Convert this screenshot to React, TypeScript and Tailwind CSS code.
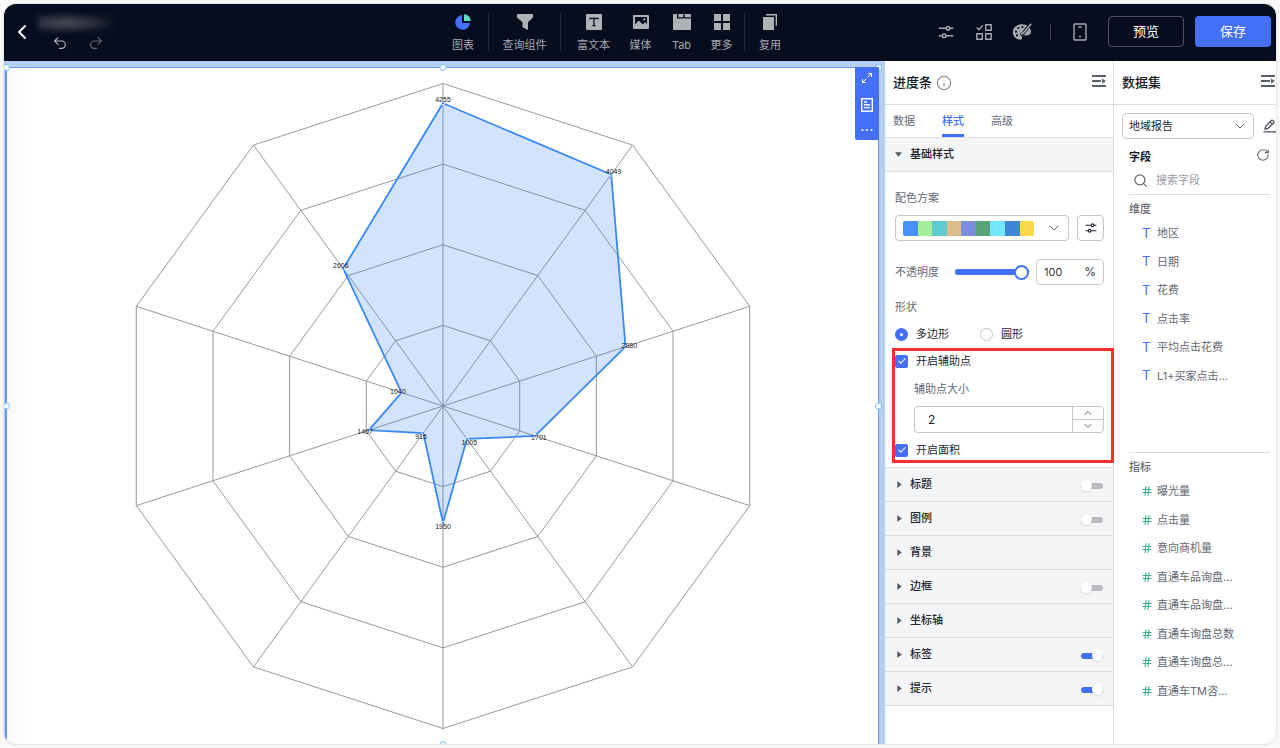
import React, { useState } from "react";
import {
  ChevronLeft,
  ChevronDown,
  ChevronUp,
  Undo2,
  Redo2,
  Check,
  Hash,
  Search,
  Maximize2,
  RotateCw,
  Info,
} from "lucide-react";

const PALETTE = [
  "bg-[#4690f7]",
  "bg-[#a5ee9a]",
  "bg-[#5fcbd0]",
  "bg-[#dcbc8a]",
  "bg-[#7c8edb]",
  "bg-[#5aa279]",
  "bg-[#71e6fd]",
  "bg-[#3f87d6]",
  "bg-[#fbd94b]",
];

const DIMENSIONS = ["地区", "日期", "花费", "点击率", "平均点击花费", "L1+买家点击…"];
const MEASURES = [
  "曝光量",
  "点击量",
  "意向商机量",
  "直通车品询盘…",
  "直通车品询盘…",
  "直通车询盘总数",
  "直通车询盘总…",
  "直通车TM咨…",
];

const VALUES = [4255, 4049, 2880, 1701, 1005, 1950, 915, 1467, 1040, 2606];
const AXIS_MIN = 500;
const AXIS_MAX = 4500;
const RADIUS = 322.5;

function polar(index: number, r: number): [number, number] {
  const angle = (index * 2 * Math.PI) / VALUES.length;
  return [Math.sin(angle) * r, -Math.cos(angle) * r];
}

function ring(radii: number[]) {
  return radii
    .map((r, i) => polar(i, r).map((n) => n.toFixed(2)).join(","))
    .join(" ");
}

function RadarChart() {
  const radii = VALUES.map((v) => ((v - AXIS_MIN) / (AXIS_MAX - AXIS_MIN)) * RADIUS);
  return (
    <svg viewBox="-310 -326 620 652" className="h-[652px] w-[620px] shrink-0" role="img" aria-label="雷达图">
      <g fill="none" stroke="#999" strokeWidth="1">
        {[0.25, 0.5, 0.75, 1].map((k) => (
          <polygon key={k} points={ring(VALUES.map(() => RADIUS * k))} />
        ))}
        {VALUES.map((_, i) => {
          const [x, y] = polar(i, RADIUS);
          return <line key={i} x1="0" y1="0" x2={x} y2={y} />;
        })}
      </g>
      <polygon points={ring(radii)} fill="#1d77f7" fillOpacity="0.2" />
      <polygon points={ring(radii)} fill="none" stroke="#3a88f8" strokeWidth="1.8" strokeLinejoin="bevel" />
      {radii.map((r, i) => {
        const [x, y] = polar(i, r);
        return <circle key={i} cx={x} cy={y} r="1.6" fill="#3a88f8" stroke="#fff" strokeWidth="0.8" />;
      })}
      <g fill="#222" fontSize="7" textAnchor="middle" className="font-['Liberation_Sans',sans-serif]">
        {radii.map((r, i) => {
          const [x, y] = polar(i, r + 4);
          return (
            <text key={i} x={x} y={y + 2.5}>
              {VALUES[i]}
            </text>
          );
        })}
      </g>
    </svg>
  );
}

function PieIcon() {
  return (
    <svg viewBox="0 0 18 18" className="size-[18px]">
      <path d="M8 2v8h8a7.4 7.4 0 1 1-8-8z" fill="#4370f6" />
      <path d="M10 1.2A7 7 0 0 1 16.8 8H10z" fill="#5fdcc0" />
    </svg>
  );
}
function FunnelIcon() {
  return (
    <svg viewBox="0 0 18 18" className="size-[18px]" fill="#b0b1b5">
      <path d="M1.5 1h15a.5.5 0 0 1 .5.5v3L12 9.3V17l-5.500-2.800V9.300L1 4.500v-3a.5.5 0 0 1 .5-.5z" />
    </svg>
  );
}
function RichTextIcon() {
  return (
    <svg viewBox="0 0 18 18" className="size-[18px]">
      <rect x="1" y="1" width="16" height="16" rx="1" fill="#b0b1b5" />
      <path d="M5 6.500V5.400h8v1.100M9 5.400v7.200M7.400 12.600h3.200" stroke="#070d1f" strokeWidth="1.300" fill="none" />
    </svg>
  );
}
function MediaIcon() {
  return (
    <svg viewBox="0 0 18 18" className="size-[18px]">
      <rect x="1" y="2" width="16" height="14" rx="1" fill="#b0b1b5" />
      <path d="M3 11.500V4h12v7.500l-1.600-2.400-2.700 2.400-3.900-4z" fill="#070d1f" />
      <circle cx="12.400" cy="6.400" r="1.100" fill="#b0b1b5" />
    </svg>
  );
}
function TabIcon() {
  return (
    <svg viewBox="0 0 18 18" className="size-[18px]" fill="#b0b1b5">
      <path d="M0 2a1 1 0 0 1 1-1h3v4.500h14V16a1 1 0 0 1-1 1H1a1 1 0 0 1-1-1zM5.400 1h5v3.200h-5zM11.800 1H17a1 1 0 0 1 1 1v2.200h-6.200z" />
    </svg>
  );
}
function GridIcon() {
  return (
    <svg viewBox="0 0 18 18" className="size-[18px]" fill="#b0b1b5">
      <path d="M1 1h7v7H1zM10 1h7v7h-7zM1 10h7v7H1zM10 10h7v7h-7z" />
    </svg>
  );
}
function CopyIcon() {
  return (
    <svg viewBox="0 0 18 18" className="size-[18px]">
      <rect x="2" y="4" width="11" height="13" rx=".6" fill="#b0b1b5" />
      <path d="M5 1.700h10.300v11" stroke="#b0b1b5" strokeWidth="1.400" fill="none" />
    </svg>
  );
}
function SlidersIcon({ className }: { className: string }) {
  return (
    <svg viewBox="0 0 16 16" className={className} fill="none" stroke="currentColor" strokeWidth="1.500">
      <path d="M.8 4.300h7.400M12 4.300h3.200M.8 11.700h3.400M8 11.700h7.200" />
      <circle cx="10.100" cy="4.300" r="1.800" />
      <circle cx="6.100" cy="11.700" r="1.800" />
    </svg>
  );
}
function CollapseIcon() {
  return (
    <svg viewBox="0 0 16 14" className="h-3.5 w-4 shrink-0 text-[#5a5e67]">
      <path d="M1 2h14M1 7h9M1 12h14" stroke="currentColor" strokeWidth="2" />
      <path d="M11 4.400l4 2.600-4 2.600z" fill="currentColor" />
    </svg>
  );
}

const TOOL_GROUPS = [
  { className: "w-[51px]", tools: [{ label: "图表", icon: PieIcon, width: "w-[51px]" }] },
  { className: "w-[72px]", tools: [{ label: "查询组件", icon: FunnelIcon, width: "w-[72px]" }] },
  {
    className: "w-[184px] pl-2",
    tools: [
      { label: "富文本", icon: RichTextIcon, width: "w-[48px]" },
      { label: "媒体", icon: MediaIcon, width: "w-[46px]" },
      { label: "Tab", icon: TabIcon, width: "w-[36px]" },
      { label: "更多", icon: GridIcon, width: "w-[44px]" },
    ],
  },
  { className: "w-[50px]", tools: [{ label: "复用", icon: CopyIcon, width: "w-[50px]" }] },
];

function Header() {
  return (
    <header className="flex h-[57px] shrink-0 items-center bg-[#070d1f] pb-0.5">
      <div className="flex grow items-center gap-1 pl-1.5">
        <button aria-label="返回" className="flex text-white">
          <ChevronLeft className="size-6" strokeWidth={2} />
        </button>
        <div className="flex flex-col gap-0.5">
          <div className="h-5 w-[78px] bg-[radial-gradient(ellipse_at_35%_50%,#494c55,#2b2f3b_40%,#0b1122_70%)] blur-[2px]" />
          <div className="flex gap-5 pl-3.5 text-[#b0b1b5]">
            <button aria-label="撤销">
              <Undo2 className="size-4" strokeWidth={1.8} />
            </button>
            <button aria-label="重做" className="text-[#666a73]">
              <Redo2 className="size-4" strokeWidth={1.8} />
            </button>
          </div>
        </div>
      </div>
      <nav className="flex shrink-0 divide-x divide-[#262b3a]">
        {TOOL_GROUPS.map((group) => (
          <div key={group.tools[0].label} className={`flex h-[38px] justify-center ${group.className}`}>
            {group.tools.map(({ label, icon: Icon, width }) => (
              <button
                key={label}
                className={`flex flex-col items-center justify-between whitespace-nowrap text-[11px] leading-3 text-[#a6a8ae] ${width}`}
              >
                <Icon />
                {label}
              </button>
            ))}
          </div>
        ))}
      </nav>
      <div className="flex w-[481px] shrink-0 items-center justify-end pr-[5px] text-[#a6a8ae]">
        <button aria-label="参数" className="mr-[22px]">
          <SlidersIcon className="size-4" />
        </button>
        <button aria-label="批量选择" className="mr-[20px]">
          <svg viewBox="0 0 16 16" className="size-4" fill="none" stroke="currentColor" strokeWidth="1.400">
            <path d="M.8 3.600L3 5.800 6.800 1.400M9.700.8h5.500v5.500H9.700zM.8 9.700h5.500v5.500H.8zM9.700 9.700h5.500v5.500H9.700z" />
          </svg>
        </button>
        <button aria-label="主题" className="mr-[18px]">
          <svg viewBox="0 0 20 18" className="h-[18px] w-5">
            <path
              d="M10 1.200C4.700 1.200.8 4.700.8 9c0 4.400 3.600 7.800 7.400 7.800 2.300 0 2-1.500 1.800-2.400-.2-1.200.5-2.200 1.900-2.200h3.400c2.200 0 3.700-1.200 3.700-3.700 0-4.200-4.300-7.300-9-7.300z"
              fill="currentColor"
            />
            <g fill="#070d1f">
              <circle cx="4" cy="8.700" r="1.100" />
              <circle cx="6.300" cy="5" r="1.100" />
              <circle cx="10.400" cy="4" r="1.100" />
              <circle cx="5" cy="12.300" r="1.100" />
            </g>
            <path d="M18.800.6L11 10.500l-2.500 1.300" stroke="#070d1f" strokeWidth="3.200" fill="none" />
            <path d="M19.200.8L11.500 9.800l-2.600 1.400" stroke="currentColor" strokeWidth="1.600" fill="none" />
          </svg>
        </button>
        <span className="mr-[22px] h-4 w-px bg-[#3c404d]" />
        <button aria-label="移动端" className="mr-[21px]">
          <svg viewBox="0 0 14 18" className="h-[18px] w-3.5" fill="none" stroke="currentColor" strokeWidth="1.400">
            <rect x="1" y="1" width="12" height="16" rx=".6" />
            <path d="M5.500 4h3M6 13.500h2" />
          </svg>
        </button>
        <button className="mr-[11px] h-[31px] w-[76px] rounded-sm border border-[#50535f] text-[13px] text-white">预览</button>
        <button className="h-[31px] w-[76px] rounded-sm bg-[#4370f6] text-[13px] text-white">保存</button>
      </div>
    </header>
  );
}

function Canvas() {
  const handle = "absolute size-[7px] rounded-full border border-[#7cc4f3] bg-white";
  return (
    <main className="flex min-w-0 grow overflow-hidden bg-[#b4cff2] pt-1.5 pr-1.5 pl-px">
      <div className="relative flex grow items-center justify-center border-t border-r border-l-2 border-[#6c93f3] bg-[linear-gradient(to_right,#f9f9fa,#fff_24px)] pb-px">
        <RadarChart />
        <span className={`${handle} -top-1 -left-1`} />
        <span className={`${handle} -top-1 left-1/2 -translate-x-1/2`} />
        <span className={`${handle} top-1/2 -left-1 -translate-y-1/2`} />
        <span className={`${handle} top-1/2 -right-1 -translate-y-1/2`} />
        <span className={`${handle} -bottom-1 left-1/2 -translate-x-1/2`} />
        <span className={`${handle} -top-1 -right-1`} />
        <div className="absolute -top-px -right-px flex h-[73px] w-6 flex-col items-center justify-between rounded-b-xs bg-[#4370f6] py-1 text-white">
          <button aria-label="全屏" className="p-px">
            <Maximize2 className="size-3" strokeWidth={2} />
          </button>
          <button aria-label="详情">
            <svg viewBox="0 0 12 14" className="h-3.5 w-3" fill="none" stroke="currentColor" strokeWidth="1.400">
              <path d="M.7.7h10.600v12.600H.7zM3 4h3M3 6.800h6M3 9.600h6" />
            </svg>
          </button>
          <button aria-label="更多操作" className="py-1">
            <svg viewBox="0 0 12 4" className="h-1 w-3" fill="currentColor">
              <circle cx="1.500" cy="2" r="1.100" />
              <circle cx="6" cy="2" r="1.100" />
              <circle cx="10.500" cy="2" r="1.100" />
            </svg>
          </button>
        </div>
      </div>
    </main>
  );
}

function CheckRow({ id, label }: { id: string; label: string }) {
  const [on, setOn] = useState(true);
  return (
    <label htmlFor={id} className="flex h-5 items-center gap-2 text-[11px] text-[#23262e]">
      <span className="grid size-[13px] place-items-center">
        <input
          id={id}
          type="checkbox"
          checked={on}
          onChange={(e) => setOn(e.target.checked)}
          className="col-start-1 row-start-1 size-[13px] appearance-none rounded-xs border border-[#c4c6cc] checked:border-[#4370f6] checked:bg-[#4370f6]"
        />
        {on && <Check className="pointer-events-none z-10 col-start-1 row-start-1 size-2.5 text-white" strokeWidth={2.5} />}
      </span>
      {label}
    </label>
  );
}

function Section({ label, toggle }: { label: string; toggle?: boolean }) {
  const [on, setOn] = useState(toggle);
  return (
    <div className="flex h-[34px] items-center justify-between border-b border-[#dcdde0] bg-[#f4f5f7] pr-2.5 pl-3">
      <button className="flex items-center gap-2 text-[11px] font-medium text-[#23262e]">
        <svg viewBox="0 0 5 8" className="h-[7px] w-[5px]" fill="#555962">
          <path d="M0 0l5 4-5 4z" />
        </svg>
        {label}
      </button>
      {toggle !== undefined && (
        <button
          role="switch"
          aria-checked={!!on}
          aria-label={label}
          onClick={() => setOn(!on)}
          className={`mt-0.5 flex h-1.5 w-[22px] items-center rounded-full ${on ? "justify-end bg-[#4370f6]" : "bg-[#bbbcc2]"}`}
        >
          <span className="size-[11px] shrink-0 rounded-full bg-white shadow-sm" />
        </button>
      )}
    </div>
  );
}

function StylePanel() {
  const [shape, setShape] = useState("polygon");
  return (
    <aside className="flex w-[229px] shrink-0 flex-col border-r border-[#dcdde0] bg-white">
      <div className="flex h-11 shrink-0 items-center justify-between border-b border-[#dcdde0] pr-1.5 pl-2">
        <h2 className="flex items-center gap-1 text-[13px] font-medium text-[#16191f]">
          进度条
          <Info className="size-4 text-[#7d818a]" strokeWidth={1.6} />
        </h2>
        <button aria-label="收起样式面板" className="mb-1">
          <CollapseIcon />
        </button>
      </div>
      <div role="tablist" className="flex h-[33px] shrink-0 gap-[27px] border-b border-[#dcdde0] pl-2 text-[11px] text-[#646873]">
        <button role="tab" className="border-b-[3px] border-transparent pt-1">数据</button>
        <button role="tab" aria-selected className="border-b-[3px] border-[#4370f6] pt-1 font-medium text-[#4370f6]">
          样式
        </button>
        <button role="tab" className="border-b-[3px] border-transparent pt-1">高级</button>
      </div>
      <button className="flex h-[34px] shrink-0 items-center gap-2 border-b border-[#dcdde0] bg-[#f4f5f7] pl-2.5 text-[11px] font-medium text-[#16191f]">
        <svg viewBox="0 0 8 5" className="h-[5px] w-[7px]" fill="#555962">
          <path d="M0 0h8L4 5z" />
        </svg>
        基础样式
      </button>
      <div className="border-b border-[#dcdde0] pt-4 pr-[9px] pb-[7px] pl-2.5 text-[11px] text-[#646873]">
        <p className="mb-[7px] leading-5">配色方案</p>
        <div className="mb-[18px] flex gap-2">
          <button
            aria-label="配色方案"
            aria-haspopup="listbox"
            className="flex h-[26px] grow items-center justify-between rounded-sm border border-[#c4c6cc] pr-1.5 pl-[7px]"
          >
            <span className="flex h-[15px] w-[131px] overflow-hidden rounded-xs">
              {PALETTE.map((c) => (
                <span key={c} className={`grow ${c}`} />
              ))}
            </span>
            <ChevronDown className="size-4" strokeWidth={1.5} />
          </button>
          <button
            aria-label="自定义配色"
            className="flex h-[26px] w-[27px] items-center justify-center rounded-sm border border-[#c4c6cc] text-[#23262e]"
          >
            <SlidersIcon className="size-3" />
          </button>
        </div>
        <div className="mb-3 flex items-center">
          <label htmlFor="opacity" className="w-[60px]">
            不透明度
          </label>
          <input
            id="opacity"
            type="range"
            defaultValue={100}
            className="h-1.5 w-[74px] appearance-none rounded-full bg-[#4370f6] [&::-webkit-slider-thumb]:size-[15px] [&::-webkit-slider-thumb]:appearance-none [&::-webkit-slider-thumb]:rounded-full [&::-webkit-slider-thumb]:border-2 [&::-webkit-slider-thumb]:border-[#4370f6] [&::-webkit-slider-thumb]:bg-white"
          />
          <div className="ml-[7px] flex h-[26px] min-w-0 grow items-center rounded-sm border border-[#c4c6cc] px-[7px] text-xs text-[#33363e]">
            <input aria-label="不透明度数值" defaultValue="100" className="w-0 min-w-0 grow bg-transparent text-[11px] outline-none" />
            <span>%</span>
          </div>
        </div>
        <p className="mb-[7px] leading-5">形状</p>
        <div className="mb-[7px] flex h-5 items-center text-[#23262e]">
          {[
            { id: "polygon", label: "多边形", width: "w-[85px]" },
            { id: "circle", label: "圆形", width: "" },
          ].map((o) => (
            <label key={o.id} htmlFor={o.id} className={`flex items-center gap-2 ${o.width}`}>
              <input
                id={o.id}
                name="shape"
                type="radio"
                checked={shape === o.id}
                onChange={() => setShape(o.id)}
                className="size-[13px] appearance-none rounded-full border border-[#c4c6cc] bg-white checked:border-[5px] checked:border-[#4370f6]"
              />
              {o.label}
            </label>
          ))}
        </div>
        <div className="relative">
          <CheckRow id="points" label="开启辅助点" />
          <div className="pt-2 pb-[7px] pl-[19px]">
            <label htmlFor="pointSize" className="mb-[7px] block leading-5">
              辅助点大小
            </label>
            <div className="flex h-[27px] overflow-hidden rounded-sm border border-[#c4c6cc] bg-white">
              <input
                id="pointSize"
                defaultValue="2"
                className="w-0 min-w-0 grow bg-transparent pl-[13px] text-xs text-[#23262e] outline-none"
              />
              <div className="flex w-[31px] flex-col divide-y divide-[#c4c6cc] border-l border-[#c4c6cc]">
                <button aria-label="增加" className="flex grow items-center justify-center">
                  <ChevronUp className="size-3" strokeWidth={2} />
                </button>
                <button aria-label="减少" className="flex grow items-center justify-center">
                  <ChevronDown className="size-3" strokeWidth={2} />
                </button>
              </div>
            </div>
          </div>
          <CheckRow id="area" label="开启面积" />
          <div className="pointer-events-none absolute -top-[3px] -right-[10px] -bottom-[3px] -left-[3px] z-10 border-[3px] border-[#f5302f]" />
        </div>
      </div>
      <Section label="标题" toggle={false} />
      <Section label="图例" toggle={false} />
      <Section label="背景" />
      <Section label="边框" toggle={false} />
      <Section label="坐标轴" />
      <Section label="标签" toggle={true} />
      <Section label="提示" toggle={true} />
    </aside>
  );
}

function DatasetPanel() {
  return (
    <aside className="flex w-[162px] shrink-0 flex-col overflow-hidden bg-white text-[11px] text-[#646873]">
      <div className="flex h-11 shrink-0 items-center justify-between border-b border-[#dcdde0] pl-2">
        <h2 className="text-[13px] font-medium text-[#16191f]">数据集</h2>
        <button aria-label="收起数据集面板" className="mb-1">
          <CollapseIcon />
        </button>
      </div>
      <div className="flex items-center justify-between pt-2 pl-2">
        <div className="grid w-[132px] items-center">
          <select
            aria-label="数据集"
            className="col-start-1 row-start-1 h-[26px] appearance-none rounded-sm border border-[#c4c6cc] bg-white pl-[6px] text-[#23262e]"
          >
            <option>地域报告</option>
          </select>
          <ChevronDown className="pointer-events-none col-start-1 row-start-1 mr-1.5 size-4 justify-self-end" strokeWidth={1.5} />
        </div>
        <button aria-label="编辑数据集" className="text-[#4b4f58]">
          <svg viewBox="0 0 13 14" className="h-3.5 w-[13px]" fill="none" stroke="currentColor" strokeWidth="1.300">
            <path d="M2 10.200l.7-3L8.300 1.400a1 1 0 0 1 1.500 0l.9.9a1 1 0 0 1 0 1.500L5 9.500zM7 2.800l2.300 2.300M.5 12.900H13" />
          </svg>
        </button>
      </div>
      <div className="pt-2 pr-1.5 pl-[15px]">
        <div className="flex h-5 items-center justify-between">
          <h3 className="font-bold text-[#16191f]">字段</h3>
          <button aria-label="刷新" className="mb-1">
            <RotateCw className="size-3.5" strokeWidth={2} />
          </button>
        </div>
        <div className="flex h-7 items-center gap-2 border-b border-[#dcdde0] pl-1">
          <Search className="size-[15px] shrink-0" strokeWidth={2} />
          <input aria-label="搜索字段" placeholder="搜索字段" className="w-0 min-w-0 grow outline-none placeholder:text-[#999ca5]" />
        </div>
        <h4 className="pt-1 font-medium leading-5">维度</h4>
        <ul className="grid h-[171px] grid-rows-6 pl-3">
          {DIMENSIONS.map((name) => (
            <li key={name} className="flex items-center">
              <span className="w-4 pl-px text-[13px] text-[#4370f6]">T</span>
              {name}
            </li>
          ))}
        </ul>
        <h4 className="mt-[62px] border-t border-[#dcdde0] pt-1 font-medium leading-5">指标</h4>
        <ul className="grid h-[228px] grid-rows-8 pl-3">
          {MEASURES.map((name, i) => (
            <li key={i} className="flex items-center gap-1">
              <Hash className="size-3 text-[#3bae8e]" strokeWidth={2.2} />
              {name}
            </li>
          ))}
        </ul>
      </div>
    </aside>
  );
}

export default function App() {
  return (
    <div className="flex h-screen bg-[#f8f8f8] p-1 font-['Inter','Noto_Sans_CJK_SC',sans-serif]">
      <div className="flex min-w-0 grow flex-col overflow-hidden rounded-xl bg-white shadow-[0_0_2px_#bbb]">
        <Header />
        <div className="flex min-h-0 grow">
          <Canvas />
          <StylePanel />
          <DatasetPanel />
        </div>
      </div>
    </div>
  );
}
